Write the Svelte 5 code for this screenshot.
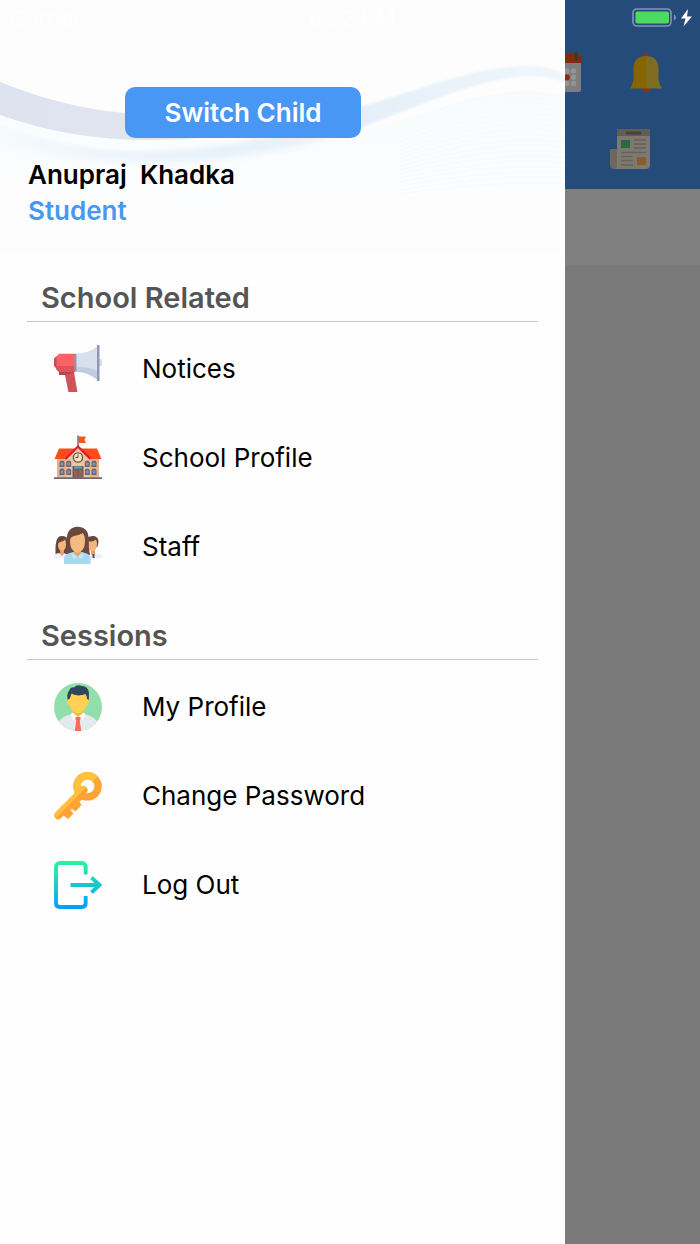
<script>
  const sections = [
    {
      title: 'School Related',
      items: [
        { label: 'Notices', icon: 'megaphone' },
        { label: 'School Profile', icon: 'school' },
        { label: 'Staff', icon: 'staff' }
      ]
    },
    {
      title: 'Sessions',
      items: [
        { label: 'My Profile', icon: 'profile' },
        { label: 'Change Password', icon: 'key' },
        { label: 'Log Out', icon: 'logout' }
      ]
    }
  ];
</script>

{#snippet glyph(name)}
  <svg class="icon" viewBox="0 0 48 48" aria-hidden="true">
    {#if name === 'megaphone'}
      <path d="M45 14h1.500q1.800 0 1.800 3.500T46.500 21H45z" fill="#d5dcec" />
      <path d="M5 26h15v1l3.400 20h-9L11 30H5z" fill="#d0535a" />
      <path d="M5 26h15v1.500L11 30H5z" fill="#b9464f" />
      <path d="M21 8.700H5L2 12v12l3 3h16z" fill="#fd6165" />
      <path d="M2 21h19v6H5l-3-3z" fill="#d8565c" />
      <path d="M0 13.500 2.500 11v12.500L0 21z" fill="#c44f58" />
      <path d="M22 8.700Q34 8.500 43 1.500v33Q34 27 22 26.700z" fill="#d7deed" />
      <path d="M22 21.500q12 .5 21 4v9Q34 27 22 26.700z" fill="#c2cce1" />
      <path d="M20.500 8.700h2v18h-2zM43 0h2.500v36H43z" fill="#8f98b2" />
    {:else if name === 'school'}
      <path d="M23.300 1.500h1.500V13h-1.500z" fill="#6f6571" />
      <path d="M24.800 2.500H32L30.500 5.800 32 9h-7.200z" fill="#fd5422" />
      <path d="M3 23h42v20.500H3z" fill="#e0b58c" />
      <path d="M5 14.500h38L47.500 25H.500z" fill="#fd4b1d" />
      <path d="m24 12-12 12.500v19h24v-19z" fill="#edc59a" />
      <path d="M11.500 25 24 12.500 36.500 25" fill="none" stroke="#e3182d" stroke-width="2.200" />
      <circle cx="24" cy="23.500" r="4.600" fill="#f8e6b2" stroke="#6d5564" stroke-width="1.400" />
      <path d="M24 20.500v3h-2.500" fill="none" stroke="#55485a" />
      {#each [8, 14.7, 33.3, 40] as x}
        {#each [27, 35] as y}
          <path d="M{x - 2.500} {y + 6}v-4.500q0-2 2.500-2t2.500 2V{y + 6}z" fill="#756070" />
          <path d="M{x - 1.300} {y + 4.500}v-3h2.600v3z" fill="#6b9ac5" />
        {/each}
      {/each}
      <path d="M18.500 32h11v11.500h-11z" fill="#695361" />
      <path d="M20 35.500h3.700v8H20zm4.500 0h3.700v8h-3.700z" fill="#94604f" />
      <path d="M20 32.500h8v2h-8z" fill="#47aee1" />
      <path d="M0 43.200h48V45H0z" fill="#706470" />
    {:else if name === 'staff'}
      <path d="M1.500 29Q1 13 7.500 13T13 18v13H1.500z" fill="#67463f" />
      <path d="M0 35v-2q0-2 5-3l3 2 3-2 4 1v4z" fill="#edf0f8" />
      <path d="M6 26h4v5l-2 2-2-2z" fill="#e6a067" />
      <path d="M4 22q0-2.500 2-3 3-.5 5-2.500 1 1 1 5 0 6-4 6t-4-5.500z" fill="#f4b67a" />
      <path d="M33 23v-8q3-2.500 7-2 4.500 1 4.500 6l-1 5z" fill="#67463f" />
      <path d="M33 35v-4l5-1 2 2 2-2q6 1 6 3.500V35z" fill="#edf0f8" />
      <path d="M37 26h4v5l-2 2-2-2z" fill="#e6a067" />
      <path d="M34 18q5 1.500 8-1.500l1 3.500q0 8-4.500 8T34 23z" fill="#f4b67a" />
      <path d="M38.500 31h2v4h-2z" fill="#43516d" />
      <path d="M11 31q2-6 1.500-14Q13 4 23.500 3.700 35 4 34.700 17 34.500 25 36 32z" fill="#694940" />
      <path d="M10 41v-6q0-4 9-6h9q8.700 2 8.700 6v6z" fill="#a8d9ef" />
      <path d="M20 26h7v4l-3.500 4-3.500-4z" fill="#e5a16a" />
      <path d="M16 18q0-4 4-5 6-1 9-3 2 3 2 8 0 10-7.500 12Q16 28 16 18z" fill="#f7ba80" />
      <path d="m17 30 6.500 3.500L30 30l-2 6-4.500-2.500L20 36z" fill="#c6e9f8" />
    {:else if name === 'profile'}
      <circle cx="24" cy="24" r="24" fill="#91dfaa" />
      <path d="M5 38.500q3-5 12.500-7.500h13q9.500 2.500 12.500 7.500A24 24 0 0 1 5 38.500z" fill="#e5e9ee" />
      <path d="M18.500 26h11v7L24 37l-5.500-4z" fill="#f4b83f" />
      <path d="m18.500 29.500 5.500 4.500-4.500 3.500-3-6zm11 0L24 34l4.500 3.500 3-6z" fill="#fff" />
      <path d="M14.500 20q-3-9 1-13 1-3.500 4.500-2.500 3-3.500 8-1.500 6 0 7 7Q35.500 16 33.500 20z" fill="#2f465e" />
      <path d="M15.500 16Q17 13 17.500 10.500q6.500 3.500 14 .5 1.500 2.500 1.500 5 2.200.2 2 3.200T32 23q-1.500 6.500-8 7.500-6.500-1-8-7.500-2.800-.5-3-3.700T15.500 16z" fill="#ffd052" />
      <path d="M21.500 34h5v2.500l-.8 1 1.500 10.300q-3 .4-6.400 0l1.500-10.300-.8-1z" fill="#ff6a55" />
    {:else if name === 'key'}
      <path d="M6 41 9.300 43.300 14 47l5.500-5.500-3-3.500 1.300-1.300L21.500 39.500 27.500 33 25.500 29.500 29 27 20 24z" fill="#ffa434" />
      <circle cx="33.500" cy="14.300" r="10.600" fill="none" stroke="#ffa434" stroke-width="7.400" />
      <path d="M26 21.800A10.600 10.600 0 0 1 41 6.800" fill="none" stroke="#ffc13e" stroke-width="7.400" />
      <path d="M4.300 43.300 29.500 18" stroke="#ffa434" stroke-width="8" stroke-linecap="round" />
      <path d="M1.500 46.100A4 4 0 0 1 1.500 40.500L26.700 15.200Q30 13 32.300 15.200z" fill="#ffc13e" />
    {:else}
      <defs>
        <linearGradient id="exit-fill" gradientUnits="userSpaceOnUse" x1="0" y1="0" x2="0" y2="48">
          <stop offset="0" stop-color="#2af598" />
          <stop offset="1" stop-color="#009efd" />
        </linearGradient>
      </defs>
      <g fill="none" stroke="url(#exit-fill)" stroke-width="3.800">
        <path d="M31.700 13.500V6q0-4-4-4H6Q2 2 2 6v36q0 4 4 4h21.700q4 0 4-4v-7" />
        <path d="M16.500 24.010 45 24M37.500 16.500 45.500 24l-8 7.500" />
      </g>
    {/if}
  </svg>
{/snippet}

<div class="screen">
  <main class="home">
    <div class="home-bar">
      <div class="home-row">
        <svg width="40" height="42" viewBox="0 0 40 42" aria-hidden="true">
          <rect y="3" width="39" height="38" rx="2" fill="#7d7d7d" />
          <path d="M0 12V5q0-2 2-2h35q2 0 2 2v7z" fill="#85290f" />
          <path d="M34 2v6" stroke="#383838" stroke-width="3" stroke-linecap="round" />
          <g fill="#939393">
            <circle cx="31.500" cy="20" r="2.700" /><circle cx="25" cy="20" r="2.700" />
            <circle cx="31.500" cy="26.300" r="2.700" /><circle cx="31.500" cy="32.500" r="2.700" />
            <circle cx="25" cy="32.500" r="2.700" />
          </g>
          <circle cx="25" cy="26.300" r="2.900" fill="#8b2a0e" />
        </svg>
        <svg width="32" height="42" viewBox="0 0 32 42" aria-hidden="true">
          <path d="M14 5V3q0-2 2-2t2 2v2zM12 37h8q0 4.500-4 4.500T12 37z" fill="#85331f" />
          <path d="M0 37.500q3.500-5 3.500-12V17Q4 5 16 5v32.500z" fill="#846500" />
          <path d="M32 37.500q-3.500-5-3.500-12V17Q28 5 16 5v32.500z" fill="#806c20" />
        </svg>
      </div>
      <div class="home-row news">
        <svg width="40" height="42" viewBox="0 0 40 42" aria-hidden="true">
          <path d="M0 21h8v20H4q-4 0-4-4z" fill="#6d695d" />
          <path d="M7 1h33v36q0 4-4 4H4q3 0 3-4z" fill="#7c7a70" />
          <path d="M7 1h33v7H7z" fill="#625e52" />
          <path d="M16 3.500h15v3H16z" fill="#484439" />
          <path d="M11 12h9v8h-9z" fill="#2d683f" />
          <path d="M27 29h9v8h-9z" fill="#885c30" />
          <path d="M24 12h12M24 16h12M24 20h12M11 24.500h25M11 28.500h12M11 32.500h12M11 37h12" stroke="#656258" stroke-width="1.300" />
        </svg>
      </div>
    </div>
    <div class="home-strip"></div>
  </main>

  <aside class="drawer">
    <header>
      <svg class="waves" viewBox="0 0 565 254" preserveAspectRatio="none" aria-hidden="true">
        <defs>
          <linearGradient id="band">
            <stop offset="0" stop-color="#dde3ef" />
            <stop offset=".6" stop-color="#e1e5f0" />
            <stop offset="1" stop-color="#e3eef8" />
          </linearGradient>
          <linearGradient id="tide">
            <stop offset="0" stop-color="#f5fafd" />
            <stop offset=".6" stop-color="#e5f1f9" />
            <stop offset="1" stop-color="#eaf2fb" />
          </linearGradient>
          <linearGradient id="mist" x1="0" y1="0" x2="0" y2="1">
            <stop offset="0" stop-color="#f8fbfd" />
            <stop offset="1" stop-color="#fcfdfe" />
          </linearGradient>
          <linearGradient id="crest">
            <stop offset="0" stop-color="#e4eff9" />
            <stop offset="1" stop-color="#f0f7fb" />
          </linearGradient>
          <filter id="soft"><feGaussianBlur stdDeviation="3" /></filter>
          <filter id="fine"><feGaussianBlur stdDeviation="1" /></filter>
        </defs>
        <path d="M0 116C70 150 180 168 300 148 400 125 470 90 530 91q20 0 35 7v97C500 180 390 192 300 198 180 210 90 205 0 172z" fill="url(#mist)" />
        <path d="M0 124C80 152 170 158 250 140L362 106V127C270 160 140 176 0 146z" fill="url(#tide)" filter="url(#soft)" />
        <path d="M0 115Q90 150 220 136 150 156 90 147 40 140 0 124z" fill="#f9fdfd" filter="url(#fine)" />
        <path d="M0 82Q65 108 125 113L240 120 220 136C150 144 75 142 0 115z" fill="url(#band)" />
        <path d="M350 110C430 87 475 66 530 66q22 0 35 9v8q-15-8-38-7C475 79 420 106 350 132z" fill="url(#crest)" filter="url(#fine)" />
        <g fill="none" stroke="#f7fafb" stroke-width="1">
          {#each Array(18) as _, i}
            <path d="M400 {126 + i * 4}Q500 {78 + i * 6} 565 {98 + i * 5}" />
          {/each}
        </g>
      </svg>
      <button class="switch" type="button">Switch Child</button>
      <h1>Anupraj&nbsp; Khadka</h1>
      <p>Student</p>
    </header>

    <nav>
      {#each sections as section}
        <section>
          <h2>{section.title}</h2>
          <ul>
            {#each section.items as item}
              <li>
                <a href="#{item.icon}">
                  {@render glyph(item.icon)}
                  <span>{item.label}</span>
                </a>
              </li>
            {/each}
          </ul>
        </section>
      {/each}
    </nav>
  </aside>

  <div class="status">
    <span>Carrier</span>
    <span>6:22 PM</span>
    <svg width="62" height="22" viewBox="0 0 62 22" aria-hidden="true">
      <rect x="1" y="2" width="38" height="17" rx="4" fill="none" stroke="#8197b4" stroke-width="1.600" />
      <rect x="3.500" y="4.500" width="33.500" height="12" rx="1.800" fill="#4cdb62" />
      <path d="M42 7.500q2 1 2 3t-2 3z" fill="#8197b4" />
      <path d="M56 2 49 11.500h4.500L51.500 19.500 60 9.500h-5z" fill="#fff" />
    </svg>
  </div>
</div>

<style>
  :global(body) {
    margin: 0;
    font-family: Inter, "Liberation Sans", sans-serif;
  }

  .screen {
    position: relative;
    display: grid;
    min-height: 100vh;
    background: #7a7a7a;
  }

  .home,
  .drawer {
    grid-area: 1 / 1;
    min-width: 0;
  }

  .home-bar {
    box-sizing: border-box;
    display: flex;
    flex-direction: column;
    gap: 35px;
    padding: 51px 38px 19px 0;
    background: #254b7a;
  }

  .home-row {
    display: flex;
    justify-content: flex-end;
    gap: 48px;
  }

  .news {
    padding-right: 12px;
  }

  .home-strip {
    height: 76px;
    background: #808080;
  }

  .drawer {
    z-index: 1;
    width: 80.7%;
    background: #fefefe;
  }

  header {
    position: relative;
    box-sizing: border-box;
    padding: 87px 28px 25px;
    background: #fdfdfd;
  }

  .waves {
    position: absolute;
    inset: 0;
    width: 100%;
    height: 100%;
  }

  .switch {
    position: relative;
    display: block;
    width: 46.500%;
    height: 51px;
    margin: 0 0 19px 19%;
    padding: 0;
    border: 0;
    border-radius: 10px;
    background: #4897f4;
    color: #fff;
    font: 600 26px/51px Inter, "Liberation Sans", sans-serif;
  }

  h1,
  header p {
    position: relative;
    margin: 0;
    font-size: 26px;
    font-weight: 600;
    line-height: 36px;
    color: #000;
  }

  header p {
    color: #4897f4;
  }

  nav {
    padding: 21px 27px 0;
  }

  section {
    margin-bottom: 22px;
  }

  h2 {
    margin: 0;
    padding: 0 14px;
    border-bottom: 1px solid #c8c8c8;
    color: #555;
    font-size: 29px;
    font-weight: 600;
    line-height: 46px;
  }

  ul {
    margin: 0;
    padding: 2px 0 0;
    list-style: none;
  }

  a {
    display: flex;
    align-items: center;
    gap: 40px;
    height: 89px;
    padding-left: 27px;
    color: #000;
    font-size: 26px;
    text-decoration: none;
  }

  .icon {
    flex: none;
    width: 48px;
    height: 48px;
    overflow: visible;
  }

  .status {
    position: absolute;
    z-index: 2;
    inset: 0 0 auto;
    display: grid;
    grid-template-columns: 1fr auto 1fr;
    align-items: center;
    height: 35px;
    padding: 0 6px 0 10px;
    color: #fff;
    font-size: 22px;
  }

  .status svg {
    justify-self: end;
  }
</style>
